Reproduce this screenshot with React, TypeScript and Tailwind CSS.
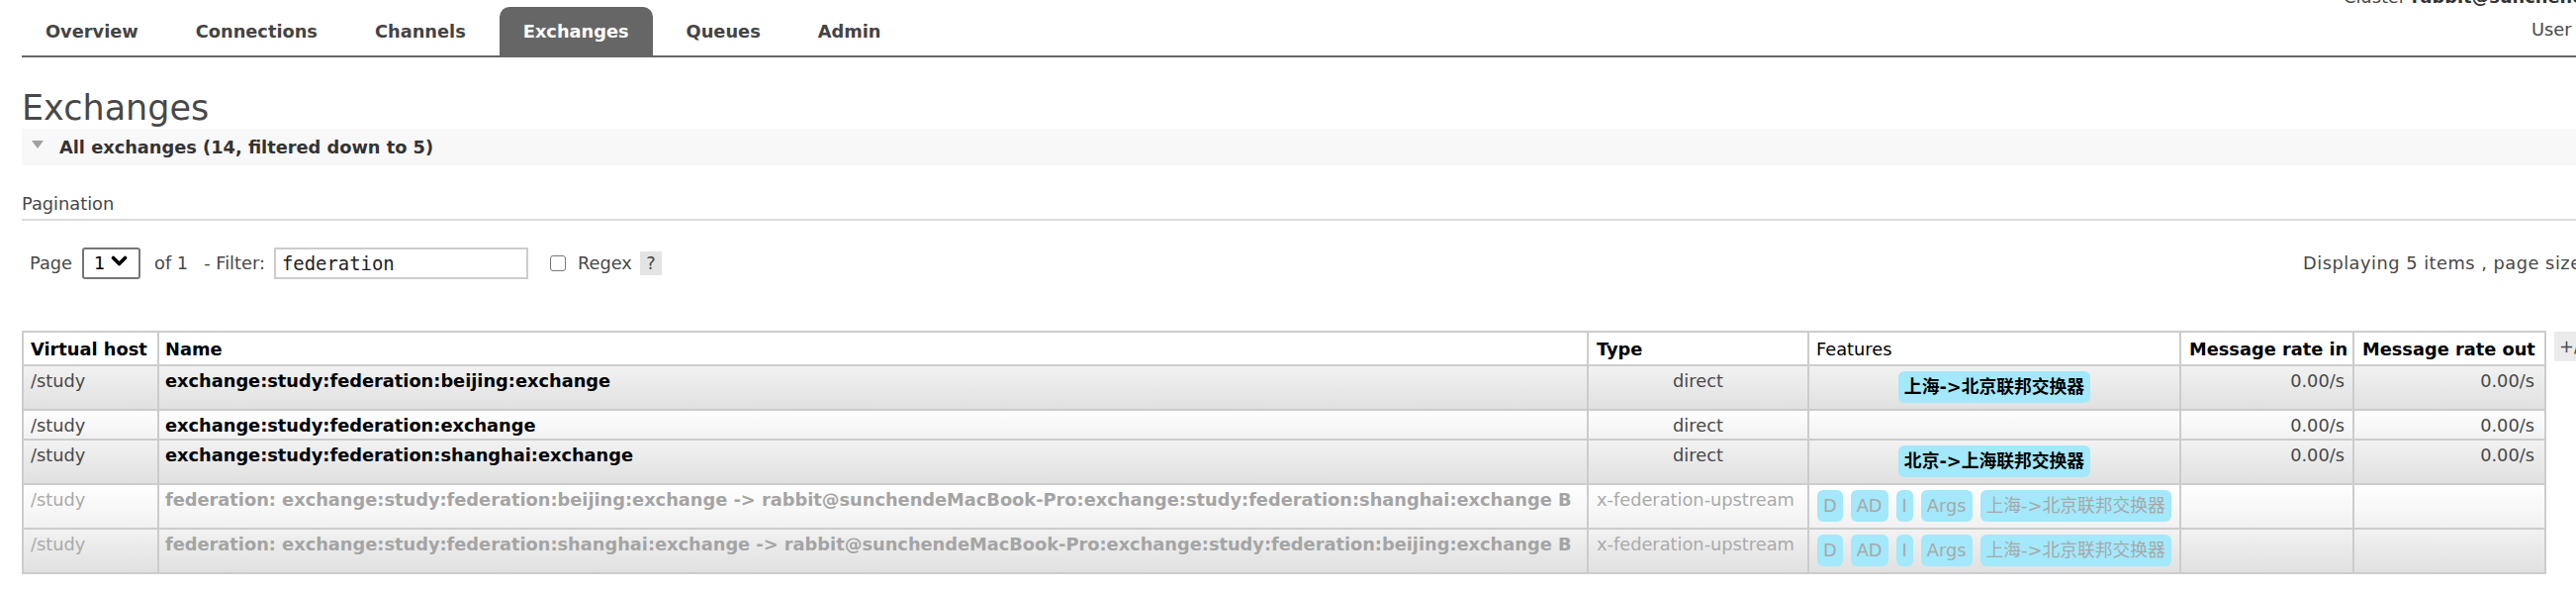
import React from "react";

type Row = {
  vh: string;
  name: string;
  type: string;
  flags: string[];
  policy: string | null;
  rin: string;
  rout: string;
  alt: 1 | 2;
  faded: boolean;
};

const rows: Row[] = [
  {
    vh: "/study",
    name: "exchange:study:federation:beijing:exchange",
    type: "direct",
    flags: [],
    policy: "上海->北京联邦交换器",
    rin: "0.00/s",
    rout: "0.00/s",
    alt: 1,
    faded: false,
  },
  {
    vh: "/study",
    name: "exchange:study:federation:exchange",
    type: "direct",
    flags: [],
    policy: null,
    rin: "0.00/s",
    rout: "0.00/s",
    alt: 2,
    faded: false,
  },
  {
    vh: "/study",
    name: "exchange:study:federation:shanghai:exchange",
    type: "direct",
    flags: [],
    policy: "北京->上海联邦交换器",
    rin: "0.00/s",
    rout: "0.00/s",
    alt: 1,
    faded: false,
  },
  {
    vh: "/study",
    name: "federation: exchange:study:federation:beijing:exchange -> rabbit@sunchendeMacBook-Pro:exchange:study:federation:shanghai:exchange B",
    type: "x-federation-upstream",
    flags: ["D", "AD", "I", "Args"],
    policy: "上海->北京联邦交换器",
    rin: "",
    rout: "",
    alt: 2,
    faded: true,
  },
  {
    vh: "/study",
    name: "federation: exchange:study:federation:shanghai:exchange -> rabbit@sunchendeMacBook-Pro:exchange:study:federation:beijing:exchange B",
    type: "x-federation-upstream",
    flags: ["D", "AD", "I", "Args"],
    policy: "上海->北京联邦交换器",
    rin: "",
    rout: "",
    alt: 1,
    faded: true,
  },
];

const tabs = ["Overview", "Connections", "Channels", "Exchanges", "Queues", "Admin"];

function Badge({ children, faded, bold }: { children: React.ReactNode; faded: boolean; bold?: boolean }) {
  return (
    <span
      className={
        "inline-block rounded-[6px] bg-[#a3e8fb] px-[6px] py-[6px] leading-[20px] " +
        (faded ? "text-[#a8a8a8] font-normal " : "text-black ") +
        (bold ? "font-bold" : "")
      }
    >
      {children}
    </span>
  );
}

const th = "border-2 border-[#ccc] pt-[7px] pb-[5px] text-black whitespace-nowrap text-left";

export default function App() {
  return (
    <div className="w-[2604px] h-[598px] overflow-hidden bg-white font-['DejaVu_Sans','Noto_Sans_CJK_SC',sans-serif] text-[17.8px] leading-[20px] text-[#484848]">
      {/* Header / tabs */}
      <div className="ml-[22px] flex h-[58px] items-end border-b-2 border-[#666]">
        <ul className="flex">
          {tabs.map((t) => (
            <li
              key={t}
              className={
                "mr-[10px] rounded-t-[10px] px-[24px] py-[14px] font-bold leading-[21px] " +
                (t === "Exchanges" ? "bg-[#666] text-white" : "text-[#444]")
              }
            >
              {t}
            </li>
          ))}
        </ul>
        <div className="ml-auto -mt-[14px] flex w-[235px] flex-col gap-[12px] self-start overflow-hidden whitespace-nowrap leading-[21px]">
          <div>
            Cluster <b className="text-[#333]">rabbit@sunchendeMacBook-Pro</b>
          </div>
          <div className="pl-[190px]">User guest</div>
        </div>
      </div>

      {/* Title */}
      <h1 className="ml-[22px] mt-[31px] text-[35px] leading-[41px] font-normal text-[#484848]">Exchanges</h1>

      {/* Section band */}
      <div className="ml-[22px] flex h-[37px] items-center bg-[#f8f8f8]">
        <svg className="ml-[10px] -mt-[5px]" width="12" height="8" viewBox="0 0 12 8">
          <path d="M0 0 H12 L6 8 Z" fill="#a0a0a0" />
        </svg>
        <span className="ml-[16px] font-bold text-[#333]">All exchanges (14, filtered down to 5)</span>
      </div>

      {/* Pagination */}
      <div className="ml-[22px] mt-[28px] border-b-2 border-[#ddd] pb-[5px] leading-[21px]">Pagination</div>

      <div className="mt-[27px] flex h-[32px] items-center whitespace-nowrap">
        <span className="ml-[30px]">Page</span>
        <div className="ml-[10px] flex h-[32px] w-[59px] items-center rounded-[3px] border-2 border-[#767676] pl-[10px]">
          <span className="text-black">1</span>
          <svg className="ml-[6px] -mt-[5px]" width="17" height="12" viewBox="0 0 17 12">
            <path d="M2.5 2.5 L8.5 8.5 L14.5 2.5" stroke="#000" strokeWidth="3.6" fill="none" strokeLinecap="round" strokeLinejoin="round" />
          </svg>
        </div>
        <span className="ml-[14px]">of 1</span>
        <span className="ml-[16px]">- Filter:</span>
        <div className="ml-[9px] flex h-[32px] w-[257px] items-center border-2 border-[#ccc] pl-[6px] font-['DejaVu_Sans_Mono',monospace] text-[18.9px] text-[#222]">
          federation
        </div>
        <span className="ml-[22px] inline-block h-[16px] w-[16px] rounded-[3px] border border-[#777] bg-white" />
        <span className="ml-[12px]">Regex</span>
        <span className="ml-[8px] flex h-[24px] w-[22px] items-center justify-center bg-[#e4e4e4]">?</span>
        <div className="ml-auto w-[276px] overflow-hidden tracking-[0.5px]">
          Displaying 5 items , page size up to: 100
        </div>
      </div>

      {/* Table */}
      <div className="ml-[22px] mt-[52px] flex items-start">
        <table className="w-[2550px] shrink-0 table-fixed border-collapse border-2 border-[#ccc]">
          <colgroup>
            <col className="w-[137px]" />
            <col className="w-[1445px]" />
            <col className="w-[223px]" />
            <col className="w-[376px]" />
            <col className="w-[175px]" />
            <col className="w-[194px]" />
          </colgroup>
          <thead>
            <tr className="bg-white">
              <th className={th + " px-[7px] font-bold"}>Virtual host</th>
              <th className={th + " px-[6px] font-bold"}>Name</th>
              <th className={th + " px-[8px] font-bold"}>Type</th>
              <th className={th + " px-[7px] font-normal"}>Features</th>
              <th className={th + " px-[8px] font-bold"}>Message rate in</th>
              <th className={th + " px-[8px] font-bold"}>Message rate out</th>
            </tr>
          </thead>
          <tbody>
            {rows.map((r, i) => {
              const bg =
                r.alt === 1
                  ? "bg-[linear-gradient(to_bottom,#f2f2f2,#e0e0e0)]"
                  : "bg-[linear-gradient(to_bottom,#ffffff,#f1f1f1)]";
              const tc = r.faded ? "text-[#aaa]" : "text-[#484848]";
              return (
                <tr key={i} className={bg}>
                  <td className={"border-2 border-[#ccc] align-top whitespace-nowrap px-[7px] pt-[5px] pb-[3px] " + tc}>{r.vh}</td>
                  <td
                    className={
                      "border-2 border-[#ccc] align-top whitespace-nowrap px-[6px] pt-[5px] pb-[3px] font-bold " +
                      (r.faded ? "text-[#a4a4a4]" : "text-black")
                    }
                  >
                    {r.name}
                  </td>
                  <td
                    className={
                      "border-2 border-[#ccc] align-top whitespace-nowrap overflow-hidden px-[8px] pt-[5px] pb-[3px] " +
                      tc +
                      (r.faded ? " text-left" : " text-center")
                    }
                  >
                    {r.type}
                  </td>
                  <td className="border-2 border-[#ccc] align-top px-[8px] pt-[5px] pb-[3px]">
                    {r.faded ? (
                      <div className="flex gap-[8px] pb-[3px] whitespace-nowrap">
                        {r.flags.map((f) => (
                          <Badge key={f} faded>
                            {f}
                          </Badge>
                        ))}
                        {r.policy && <Badge faded>{r.policy}</Badge>}
                      </div>
                    ) : r.policy ? (
                      <div className="flex justify-center pb-[3px] whitespace-nowrap">
                        <Badge faded={false} bold>
                          {r.policy}
                        </Badge>
                      </div>
                    ) : null}
                  </td>
                  <td className="border-2 border-[#ccc] align-top px-[8px] pt-[5px] pb-[3px] text-right">{r.rin}</td>
                  <td className="border-2 border-[#ccc] align-top px-[10px] pt-[5px] pb-[3px] text-right">{r.rout}</td>
                </tr>
              );
            })}
          </tbody>
        </table>
        <span className="ml-[8px] mt-[1px] shrink-0 whitespace-nowrap bg-[#ebebeb] px-[5px] py-[5px] leading-[20px]">+/-</span>
      </div>

      {/* Next section band */}
      <div className="ml-[22px] mt-[18px] flex h-[37px] items-center bg-[#f8f8f8]">
        <span className="ml-[12px] text-[#aaa]">▶</span>
        <span className="ml-[14px] font-bold text-[#333]">Add a new exchange</span>
      </div>
    </div>
  );
}
